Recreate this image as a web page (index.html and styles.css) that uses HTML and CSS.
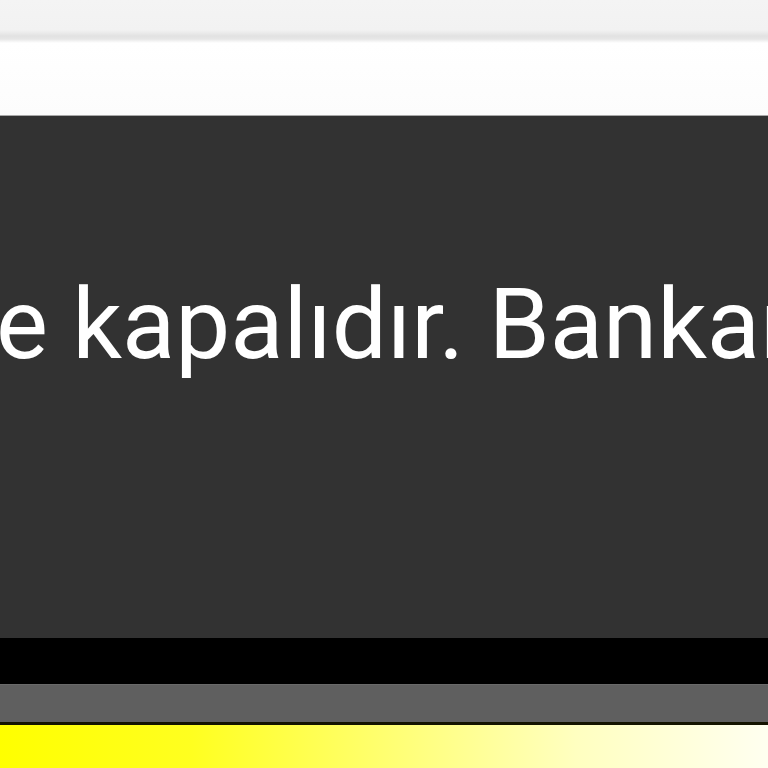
FILE: index.html
```html
<!DOCTYPE html>
<html lang="tr">
<head>
<meta charset="utf-8">
<link rel="stylesheet" href="styles.css">
</head>
<body>
<div class="page">
  <div class="topbar"></div>
  <div class="whitebar"></div>
  <div class="notice">
    <p class="msg">e kapalıdır. Bankamız</p>
  </div>
  <div class="blackbar"></div>
  <div class="greybar"></div>
  <div class="yellowbar"></div>
</div>
</body>
</html>
```
FILE: styles.css
```css
html, body {
  margin: 0;
  padding: 0;
  width: 768px;
  height: 768px;
  overflow: hidden;
  background: #ffffff;
}
.page {
  display: flex;
  flex-direction: column;
  width: 768px;
  height: 768px;
}
.topbar {
  height: 43px;
  background: linear-gradient(to bottom, #f4f4f4 0px, #f2f2f2 30px, #e2e2e2 36px, #e6e6e6 39px, #ffffff 43px);
}
.whitebar {
  height: 72px;
  background: linear-gradient(to bottom, #ffffff 0px, #fcfcfc 72px);
}
.notice {
  height: 523px;
  background: #323232;
  border-top: 1px solid #a8a8a8;
  box-sizing: border-box;
  padding-top: 160px;
  overflow: hidden;
}
.msg {
  margin: 0 0 0 -4px;
  font-family: Roboto, "Noto Sans", sans-serif;
  font-size: 98px;
  line-height: 98px;
  color: #ffffff;
  white-space: nowrap;
}
.blackbar {
  height: 46px;
  background: #000000;
}
.greybar {
  height: 37px;
  background: #5f5f5f;
  border-top: 1px solid #6a6a6a;
  border-bottom: 3px solid #141400;
}
.yellowbar {
  flex: 1;
  background: linear-gradient(to right, #ffff00 0%, #ffff20 25%, #ffff70 50%, #ffffc0 75%, #fffff0 100%);
}
```
